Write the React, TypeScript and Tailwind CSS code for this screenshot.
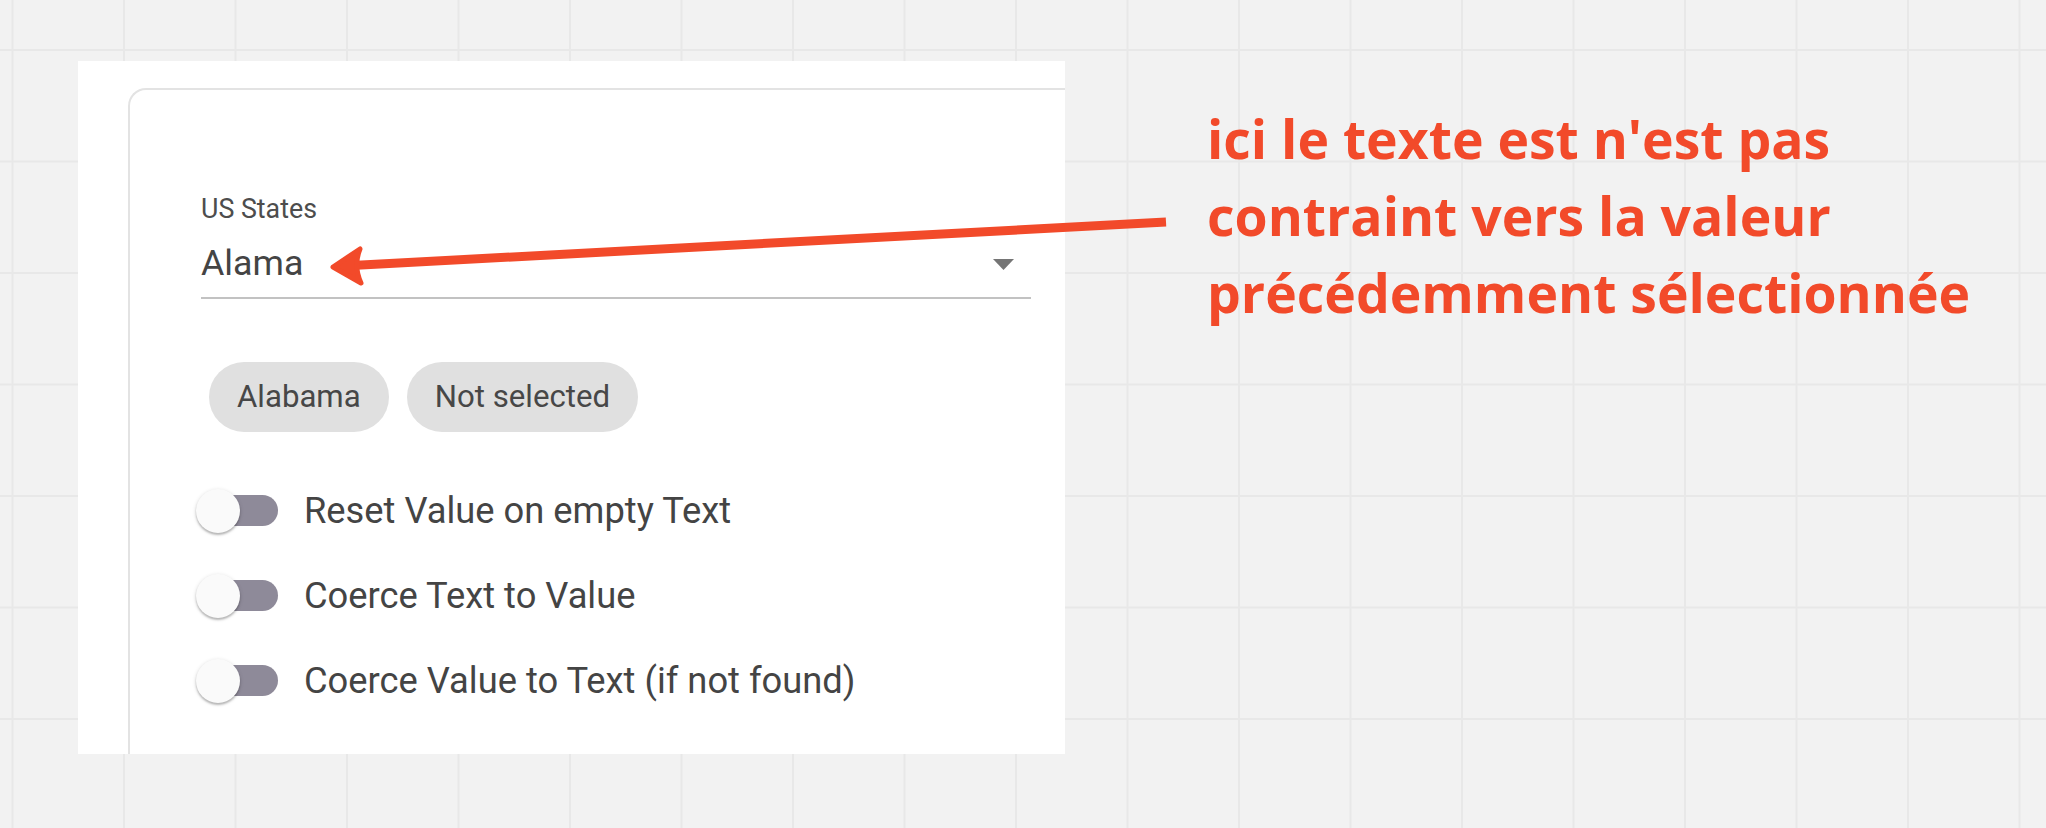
import React from "react";

function Switch() {
  return (
    <div className="relative w-[82px] h-[44px] -ml-[5px] shrink-0">
      <div className="absolute left-[8px] top-[6px] w-[74px] h-[31px] rounded-full bg-[#8e8a99]" />
      <div className="absolute left-0 top-0 w-[44px] h-[44px] rounded-full bg-[#fafafa] shadow-[0_2px_2px_rgba(0,0,0,0.22),0_1px_4px_rgba(0,0,0,0.14)]" />
    </div>
  );
}

function SwitchRow({ label }: { label: string }) {
  return (
    <div className="flex items-center h-[85px]">
      <Switch />
      <span className="ml-[26px] text-[36.3px] leading-[44px] text-[#444444] whitespace-nowrap">{label}</span>
    </div>
  );
}

function Chip({ label }: { label: string }) {
  return (
    <div className="h-[70px] px-[28px] rounded-full bg-[#e0e0e0] text-[31.2px] leading-[70px] text-[#474747] whitespace-nowrap">
      {label}
    </div>
  );
}

export default function App() {
  return (
    <div className="relative w-[2046px] h-[828px] overflow-hidden bg-[#f2f2f2] bg-[linear-gradient(to_right,#e8e8e8_2px,transparent_2px),linear-gradient(to_bottom,#e8e8e8_2px,transparent_2px)] bg-size-[111.5px_111.5px] bg-position-[11.5px_49px] font-['Roboto',sans-serif]">
      <div className="flex items-start">
        <div className="ml-[78px] mt-[61px] w-[987px] h-[693px] bg-white overflow-hidden pl-[50px] pt-[27px] shrink-0">
          <div className="w-[1000px] h-[700px] border-l-2 border-t-2 border-[#e3e3e3] rounded-tl-[18px] pl-[71px] pt-[104px]">
            <div className="w-[830px]">
              <div className="text-[26.8px] leading-[30px] text-[#4d4d4d]">US States</div>
              <div className="mt-[17px] flex items-center pb-[12px] border-b-2 border-[#c2c2c2]">
                <span className="flex-1 text-[35.8px] leading-[44px] text-[#444444]">Alama</span>
                <svg width="21" height="11" viewBox="0 0 21 11" className="mr-[17px] mt-[3px]">
                  <polygon points="0,0 21,0 10.5,11" fill="#757575" />
                </svg>
              </div>
              <div className="mt-[63px] ml-[8px] flex gap-[18px]">
                <Chip label="Alabama" />
                <Chip label="Not selected" />
              </div>
              <div className="mt-[36px] flex flex-col">
                <SwitchRow label="Reset Value on empty Text" />
                <SwitchRow label="Coerce Text to Value" />
                <SwitchRow label="Coerce Value to Text (if not found)" />
              </div>
            </div>
          </div>
        </div>
        <div className="ml-[142px] mt-[100px] font-['Open_Sans',sans-serif] font-bold text-[53.5px] leading-[77px] text-[#f24a2a] whitespace-nowrap">
          <div>ici le texte est n'est pas</div>
          <div>contraint vers la valeur</div>
          <div>précédemment sélectionnée</div>
        </div>
      </div>
      <svg
        className="absolute left-0 top-0 pointer-events-none"
        width="2046"
        height="828"
        viewBox="0 0 2046 828"
      >
        <line x1="352" y1="265.5" x2="1166" y2="222" stroke="#f24a2a" strokeWidth="9" />
        <path
          d="M333 267 L360 249 Q353 266 361 283 Z"
          fill="#f24a2a"
          stroke="#f24a2a"
          strokeWidth="5"
          strokeLinejoin="round"
        />
      </svg>
    </div>
  );
}
